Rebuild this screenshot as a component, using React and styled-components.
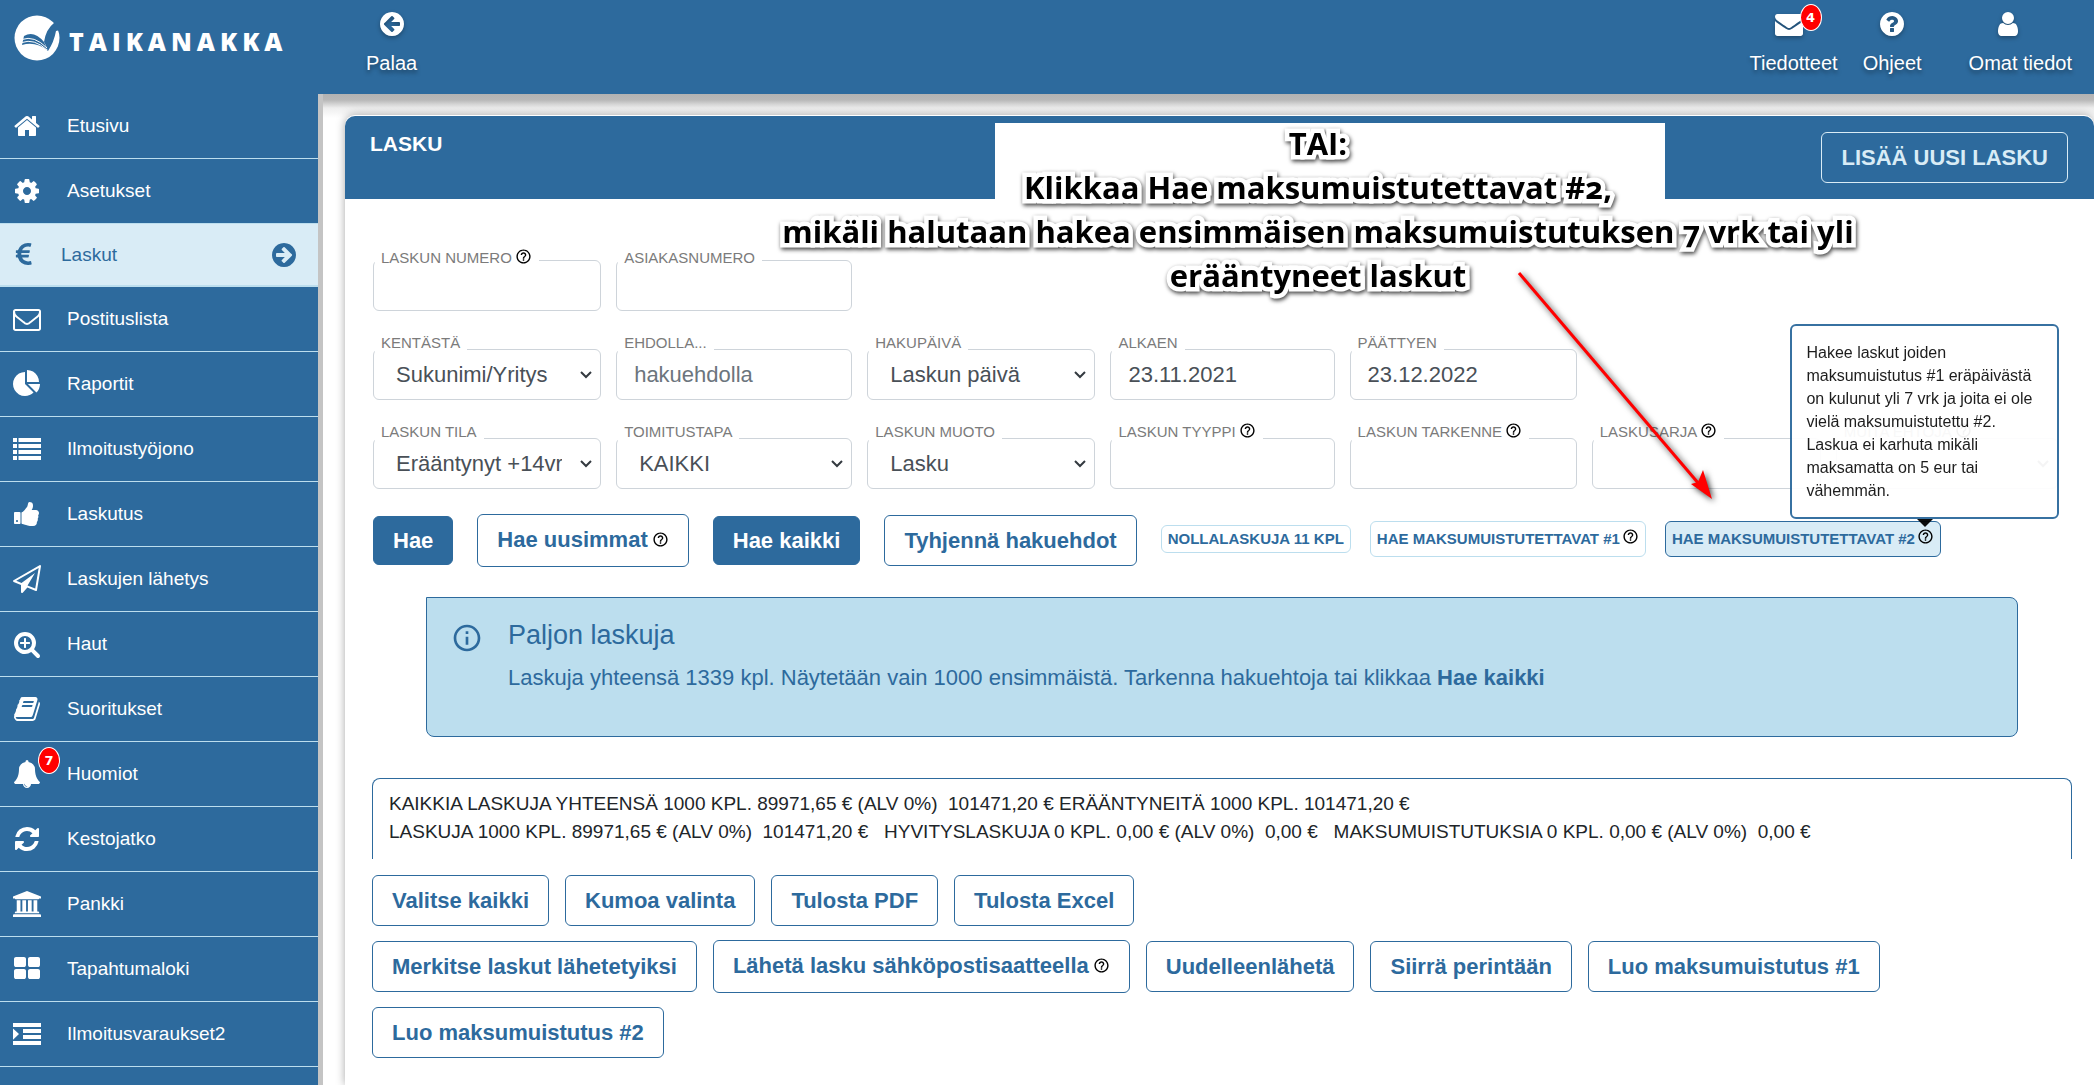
import React from "react";
import styled, { createGlobalStyle, css } from "styled-components";
import { MdHelpOutline, MdInfoOutline } from "react-icons/md";

const blue = "#2d6a9d";
const paleBlue = "#d9ecf6";
const softBlue = "#bcdeee";

const GlobalStyle = createGlobalStyle`
  *, *::before, *::after { box-sizing: border-box; }
  body {
    margin: 0;
    background: #fff;
    color: #212529;
    font-family: "Liberation Sans", Arial, sans-serif;
  }
`;

/* ---------- icons ---------- */

const Glyph = styled.svg`
  display: block;
  width: ${(p) => p.$size || 28}px;
  height: ${(p) => p.$size || 28}px;
  fill: currentColor;
  flex: none;
`;

const paths = {
  home: "M1472 992v480q0 26-19 45t-45 19h-384v-384h-256v384h-384q-26 0-45-19t-19-45v-480q0-1 .5-3t.5-3l575-474 575 474q1 2 1 6zm223-69l-62 74q-8 9-21 11h-3q-13 0-21-7l-692-577-692 577q-12 8-24 7-13-2-21-11l-62-74q-8-10-7-23.5t11-21.5l719-599q32-26 76-26t76 26l244 204v-195q0-14 9-23t23-9h192q14 0 23 9t9 23v408l219 182q10 8 11 21.5t-7 23.5z",
  cog: "M1152 896q0-106-75-181t-181-75-181 75-75 181 75 181 181 75 181-75 75-181zm512-109v222q0 12-8 23t-20 13l-185 28q-19 54-39 91 35 50 107 138 10 12 10 25t-9 23q-27 37-99 108t-94 71q-12 0-26-9l-138-108q-44 23-91 38-16 136-29 186-7 28-36 28h-222q-14 0-24.5-8.5t-11.5-21.5l-28-184q-49-16-90-37l-141 107q-10 9-25 9-14 0-25-11-126-114-165-168-7-10-7-23 0-12 8-23 15-21 51-66.5t54-70.5q-27-50-41-99l-183-27q-13-2-21-12.5t-8-23.5v-222q0-12 8-23t19-13l186-28q14-46 39-92-40-57-107-138-10-12-10-24 0-10 9-23 26-36 98.5-107.5t94.5-71.5q13 0 26 10l138 107q44-23 91-38 16-136 29-186 7-28 36-28h222q14 0 24.5 8.5t11.5 21.5l28 184q49 16 90 37l142-107q9-9 24-9 13 0 25 10 129 119 165 170 7 8 7 22 0 12-8 23-15 21-51 66.5t-54 70.5q26 50 41 98l183 28q13 2 21 12.5t8 23.5z",
  euro: "M1360 1307l35 159q3 12-3 22.5t-17 14.5l-5 1q-4 2-10.5 3.5t-16 4.5-21.5 5.5-25.5 5-30 5-33.5 4.5-36.5 3-38.5 1q-234 0-409-130.5t-238-351.5h-95q-13 0-22.5-9.5t-9.5-22.5v-113q0-13 9.5-22.5t22.5-9.5h66q-2-57 1-105h-67q-14 0-23-9t-9-23v-114q0-14 9-23t23-9h98q67-210 243.5-338t400.5-128q102 0 194 23 11 3 20 15 6 11 3 24l-43 159q-3 13-14 19.5t-24 2.5l-4-1q-4-1-11.5-2.5l-17.5-3.5-22.5-3.5-26-3-29-2.5-29.5-1q-126 0-226 64t-150 176h468q16 0 25 12 10 12 7 26l-24 114q-5 26-32 26h-488q-3 37 0 105h459q15 0 25 12 9 12 6 27l-24 112q-2 11-11 18.5t-20 7.5h-387q48 117 149.5 185.5t228.5 68.5q18 0 36-1.5t33.5-3.5 29.5-4.5 24.5-5 18.5-4.5l12-3 5-2q13-5 26 2 12 7 15 21z",
  envelopeOpen: "M1664 1504v-768q-32 36-69 66-268 206-426 338-51 43-83 67t-86.5 48.5-102.5 24.5h-2q-48 0-102.5-24.5t-86.5-48.5-83-67q-158-132-426-338-37-30-69-66v768q0 13 9.5 22.5t22.5 9.5h1472q13 0 22.5-9.5t9.5-22.5zm0-1051v-24.5l-.5-13-3-12.5-5.5-9-9-7.5-14-2.5h-1472q-13 0-22.5 9.5t-9.5 22.5q0 168 147 284 193 152 401 317 6 5 35 29.5t46 37.5 44.5 31.5 50.5 27.5 43 9h2q20 0 43-9t50.5-27.5 44.5-31.5 46-37.5 35-29.5q208-165 401-317 54-43 100.5-115.5t46.5-131.5zm128-37v1088q0 66-47 113t-113 47h-1472q-66 0-113-47t-47-113v-1088q0-66 47-113t113-47h1472q66 0 113 47t47 113z",
  pie: "M768 890l546 546q-106 108-247.5 168t-298.5 60q-209 0-385.5-103t-279.5-279.5-103-385.5 103-385.5 279.5-279.5 385.5-103v762zm187 6h773q0 157-60 298.5t-168 247.5zm709-128h-768v-768q209 0 385.5 103t279.5 279.5 103 385.5z",
  list: "M0 192h256v256h-256zM352 192h1440v256h-1440zM0 576h256v256h-256zM352 576h1440v256h-1440zM0 960h256v256h-256zM352 960h1440v256h-1440zM0 1344h256v256h-256zM352 1344h1440v256h-1440z",
  thumb: "M320 1344q0-26-19-45t-45-19q-27 0-45.5 19t-18.5 45q0 27 18.5 45.5t45.5 18.5q26 0 45-18.5t19-45.5zm160-512v640q0 26-19 45t-45 19h-288q-26 0-45-19t-19-45v-640q0-26 19-45t45-19h288q26 0 45 19t19 45zm1184 0q0 86-55 149 15 44 15 76 3 76-43 137 17 56 0 117-15 57-54 94 9 112-49 181-64 76-197 78h-129q-66 0-144-15.5t-121.5-29-120.5-39.5q-123-43-158-44-26-1-45-19.5t-19-44.5v-641q0-25 18-43.5t43-20.5q24-2 76-59t101-121q68-87 101-120 18-18 31-48t17.5-48.5 13.5-60.5q7-39 12.5-61t19.5-52 34-50q19-19 45-19 46 0 82.5 10.5t60 26 40 40.5 24 45 12 50 5 45 .5 39q0 38-9.5 76t-19 60-27.5 56q-3 6-10 18t-11 22-8 24h277q78 0 135 57t57 135z",
  plane: "M1764 11q33 24 27 64l-256 1536q-5 29-32 45-14 8-31 8-11 0-24-5l-527-215-298 327q-18 21-47 21-14 0-23-4-19-7-30-23.5t-11-36.5v-452l-472-193q-37-14-40-55-3-39 32-59l1664-960q35-21 68 2zm-342 1499l221-1323-1434 827 336 137 863-639-478 797z",
  searchPlus: "M1088 800v64q0 13-9.5 22.5t-22.5 9.5h-224v224q0 13-9.5 22.5t-22.5 9.5h-64q-13 0-22.5-9.5t-9.5-22.5v-224h-224q-13 0-22.5-9.5t-9.5-22.5v-64q0-13 9.5-22.5t22.5-9.5h224v-224q0-13 9.5-22.5t22.5-9.5h64q13 0 22.5 9.5t9.5 22.5v224h224q13 0 22.5 9.5t9.5 22.5zm128 32q0-185-131.5-316.5t-316.5-131.5-316.5 131.5-131.5 316.5 131.5 316.5 316.5 131.5 316.5-131.5 131.5-316.5zm512 832q0 53-37.5 90.5t-90.5 37.5q-54 0-90-38l-343-342q-179 124-399 124-143 0-273.5-55.5t-225-150-150-225-55.5-273.5 55.5-273.5 150-225 225-150 273.5-55.5 273.5 55.5 225 150 150 225 55.5 273.5q0 220-124 399l343 343q37 37 37 90z",
  book: "M1703 478q40 57 18 129l-275 906q-19 64-76.5 107.5t-122.5 43.5h-923q-77 0-148.5-53.5t-99.5-131.5q-24-67-2-127 0-4 3-27t4-37q1-8-3-21.5t-3-19.5q2-11 8-21t16.5-23.5 16.5-23.5q23-38 45-91.5t30-91.5q3-10 .5-30t-.5-28q3-11 17-28t17-23q21-36 42-92t25-90q1-9-2.5-32t.5-28q4-13 22-30.5t22-22.5q19-26 42.5-84.5t27.5-96.5q1-8-3-25.5t-2-26.5q2-8 9-18t18-23 17-21q8-12 16.5-30.5t15-35 16-36 19.5-32 26.5-23.5 36-11.5 47.5 5.5l-1 3q38-9 51-9h761q74 0 114 56t18 130l-274 906q-36 119-71.5 153.5t-128.5 34.5h-869q-27 0-38 15-11 16-1 43 24 70 144 70h923q29 0 56-15.5t35-41.5l300-987q7-22 5-57 38 15 59 43zm-1064 2q-4 13 2 22.5t20 9.5h608q13 0 25.5-9.5t16.5-22.5l21-64q4-13-2-22.5t-20-9.5h-608q-13 0-25.5 9.5t-16.5 22.5zm-83 256q-4 13 2 22.5t20 9.5h608q13 0 25.5-9.5t16.5-22.5l21-64q4-13-2-22.5t-20-9.5h-608q-13 0-25.5 9.5t-16.5 22.5z",
  bell: "M912 1696q0-16-16-16-59 0-101.5-42.5t-42.5-101.5q0-16-16-16t-16 16q0 73 51.5 124.5t124.5 51.5q16 0 16-16zm816-288q0 52-38 90t-90 38h-448q0 106-75 181t-181 75-181-75-75-181h-448q-52 0-90-38t-38-90q50-42 91-88t85-119.5 74.5-158.5 50-206 19.5-260q0-152 117-282.5t307-158.5q-8-19-8-39 0-40 28-68t68-28 68 28 28 68q0 20-8 39 190 28 307 158.5t117 282.5q0 139 19.5 260t50 206 74.5 158.5 85 119.5 91 88z",
  refresh: "M1639 1056q0 5-1 7-64 268-268 434.5t-478 166.5q-146 0-282.5-55t-243.5-157l-129 129q-19 19-45 19t-45-19-19-45v-448q0-26 19-45t45-19h448q26 0 45 19t19 45-19 45l-137 137q71 66 161 102t187 36q134 0 250-65t186-179q11-17 53-117 8-23 30-23h192q13 0 22.5 9.5t9.5 22.5zm25-800v448q0 26-19 45t-45 19h-448q-26 0-45-19t-19-45 19-45l138-138q-148-137-349-137-134 0-250 65t-186 179q-11 17-53 117-8 23-30 23h-199q-13 0-22.5-9.5t-9.5-22.5v-7q65-268 270-434.5t480-166.5q146 0 284 55.5t245 156.5l130-129q19-19 45-19t45 19 19 45z",
  bank: "M832 0l960 384v128h-128q0 26-20.5 45t-48.5 19h-1526q-28 0-48.5-19t-20.5-45h-128v-128zm-704 640h256v768h128v-768h256v768h128v-768h256v768h128v-768h256v768h59q28 0 48.5 19t20.5 45v64h-1664v-64q0-26 20.5-45t48.5-19h59v-768zm1595 960q28 0 48.5 19t20.5 45v128h-1920v-128q0-26 20.5-45t48.5-19h1782z",
  large: "M832 1024v384q0 52-38 90t-90 38h-512q-52 0-90-38t-38-90v-384q0-52 38-90t90-38h512q52 0 90 38t38 90zm0-768v384q0 52-38 90t-90 38h-512q-52 0-90-38t-38-90v-384q0-52 38-90t90-38h512q52 0 90 38t38 90zm896 768v384q0 52-38 90t-90 38h-512q-52 0-90-38t-38-90v-384q0-52 38-90t90-38h512q52 0 90 38t38 90zm0-768v384q0 52-38 90t-90 38h-512q-52 0-90-38t-38-90v-384q0-52 38-90t90-38h512q52 0 90 38t38 90z",
  indent: "M0 192h1792v256h-1792zM640 576h1152v256h-1152zM640 960h1152v256h-1152zM0 1344h1792v256h-1792zM0 540l384 360-384 360z",
  arrowRight: "M1413 896q0-27-18-45l-91-91-362-362q-18-18-45-18t-45 18l-91 91q-18 18-18 45t18 45l189 189h-502q-26 0-45 19t-19 45v128q0 26 19 45t45 19h502l-189 189q-19 19-19 45t19 45l91 91q18 18 45 18t45-18l362-362 91-91q18-18 18-45zm251 0q0 209-103 385.5t-279.5 279.5-385.5 103-385.5-103-279.5-279.5-103-385.5 103-385.5 279.5-279.5 385.5-103 385.5 103 279.5 279.5 103 385.5z",
  envelope: "M1792 710v794q0 66-47 113t-113 47h-1472q-66 0-113-47t-47-113v-794q44 49 101 87 362 246 497 345 57 42 92.5 65.5t94.5 48 110 24.5h2q51 0 110-24.5t94.5-48 92.5-65.5q170-123 498-345 57-39 100-87zm0-294q0 79-49 151t-122 123q-376 261-468 325-10 7-42.5 31t-54 38.5-52 32.5-57.5 27-50 9h-2q-23 0-50-9t-57.5-27-52-32.5-54-38.5-42.5-31q-91-64-262-182.5t-205-142.5q-62-42-117-115.5t-55-136.5q0-78 41.5-130t118.5-52h1472q65 0 112.5 47t47.5 113z",
  question: "M1024 1376v-192q0-14-9-23t-23-9h-192q-14 0-23 9t-9 23v192q0 14 9 23t23 9h192q14 0 23-9t9-23zm256-672q0-88-55.5-163t-138.5-116-170-41q-243 0-371 213-15 24 8 42l132 100q7 6 19 6 16 0 25-12 53-68 86-92 34-24 86-24 48 0 85.5 26t37.5 59q0 38-20 61t-68 45q-63 28-115.5 86.5t-52.5 125.5v36q0 14 9 23t23 9h192q14 0 23-9t9-23q0-19 21.5-49.5t54.5-49.5q32-18 49-28.5t46-35 44.5-48 28-60.5 12.5-81zm384 192q0 209-103 385.5t-279.5 279.5-385.5 103-385.5-103-279.5-279.5-103-385.5 103-385.5 279.5-279.5 385.5-103 385.5 103 279.5 279.5 103 385.5z",
  user: "M1536 1399q0 109-62.5 187t-150.5 78h-854q-88 0-150.5-78t-62.5-187q0-85 8.5-160.5t31.5-152 58.5-131 94-89 134.5-34.5q131 128 313 128t313-128q76 0 134.5 34.5t94 89 58.5 131 31.5 152 8.5 160.5zm-256-887q0 159-112.5 271.5t-271.5 112.5-271.5-112.5-112.5-271.5 112.5-271.5 271.5-112.5 271.5 112.5 112.5 271.5z",
};

const boxes = { bank: "-128 0 1920 1792", euro: "200 0 1792 1792" };

function Icon({ name, size, flip }) {
  return (
    <Glyph viewBox={boxes[name] || "0 0 1792 1792"} $size={size} aria-hidden="true">
      <path d={paths[name]} transform={flip ? "translate(1792 0) scale(-1 1)" : undefined} />
    </Glyph>
  );
}

/* ---------- page frame ---------- */

const Page = styled.div`
  min-height: 100vh;
  display: grid;
  grid-template-columns: 323px minmax(0, 1fr);
  grid-template-rows: 94px 1fr;
`;

const Header = styled.header`
  grid-column: 1 / -1;
  display: flex;
  background: ${blue};
  position: relative;
`;

const Brand = styled.a`
  width: 318px;
  height: 75px;
  padding-left: 14px;
  display: flex;
  align-items: center;
  gap: 9px;
  color: #fff;
  text-decoration: none;
`;

const BrandMark = styled.svg`
  width: 46px;
  height: 46px;
  flex: none;
`;

const BrandName = styled.span`
  font: 800 25px/30px "Open Sans", Lato, sans-serif;
  letter-spacing: 5px;
  padding-top: 6px;
`;

const TopNav = styled.nav`
  display: flex;
  gap: ${(p) => p.$gap || 0}px;
  padding: 10px 22px 0 48px;
  ${(p) => p.$end && css`margin-left: auto;`}
`;

const TopLink = styled.a`
  display: flex;
  flex-direction: column;
  align-items: center;
  gap: 13px;
  color: #fff;
  font-size: 20px;
  line-height: 24px;
  text-decoration: none;
  text-shadow: 0 3px 4px rgba(0, 0, 0, 0.4);
  ${(p) => p.$spaced && css`margin-left: 22px;`}
  svg { filter: drop-shadow(0 2px 2px rgba(0, 0, 0, 0.3)); }
`;

const IconHolder = styled.span`
  position: relative;
  display: block;
  margin-right: ${(p) => p.$trail || 0}px;
`;

const Badge = styled.span`
  position: absolute;
  left: 25px;
  top: ${(p) => p.$top}px;
  width: 22px;
  height: 27px;
  border: 1px solid #fff;
  border-radius: 50%;
  background: #f00;
  color: #fff;
  text-align: center;
  text-shadow: none;
  font: bold 13px/25px "DejaVu Sans", sans-serif;
`;

const Sidebar = styled.nav`
  background: ${blue};
  border-right: 5px solid #c4c4c4;
`;

const Menu = styled.ul`
  list-style: none;
  margin: 0;
  padding: 0;
`;

const MenuLink = styled.a`
  display: flex;
  align-items: center;
  height: ${(p) => (p.$active ? 63 : 65)}px;
  padding: 0 20px 0 13px;
  gap: ${(p) => (p.$active ? 20 : 26)}px;
  border-bottom: ${(p) => (p.$active ? 2 : 1)}px solid ${softBlue};
  background: ${(p) => (p.$active ? paleBlue : blue)};
  color: ${(p) => (p.$active ? blue : "#fff")};
  font-size: 19px;
  line-height: 24px;
  text-decoration: none;
`;

const MenuText = styled.span`
  flex: 1;
`;

const Main = styled.main`
  position: relative;
  display: flex;
  flex-direction: column;
  padding: 21px 0 0 22px;
  background: linear-gradient(#b2b2b2 0, #b8b8b8 6px, #eeeeee 14px, #fff 24px) no-repeat 0 0 / 100% 24px;
`;

/* ---------- card ---------- */

const Card = styled.section`
  flex: 1;
  border-top: 1px solid #fff;
  border-radius: 10px 10px 0 0;
  background: #fff;
  box-shadow: 0 0 10px rgba(0, 0, 0, 0.35);
`;

const CardHeader = styled.div`
  display: flex;
  justify-content: space-between;
  align-items: flex-start;
  height: 83px;
  padding: 16px 26px 0 25px;
  border-radius: 10px 10px 0 0;
  background: ${blue};
`;

const Title = styled.h1`
  margin: 0;
  color: #fff;
  font-size: 21px;
  line-height: 24px;
`;

const CardBody = styled.div`
  padding: 49px 22px 0 27px;
`;

const Fields = styled.form`
  display: grid;
  grid-template-columns: 228fr 236fr 228fr 224fr 227fr 229fr 222fr;
  gap: 22px 15px;
  padding: 0 14px 0 1px;
`;

const Field = styled.div`
  display: grid;
  grid-template-rows: ${(p) => (p.$compact ? 12 : 16)}px 51px;
  grid-template-columns: minmax(0, 1fr);
  ${(p) => p.$first && css`grid-column: 1;`}
`;

const Label = styled.label`
  z-index: 1;
  justify-self: start;
  display: flex;
  gap: 3px;
  height: 19px;
  margin-left: 2px;
  padding: 0 7px 0 6px;
  background: #fff;
  color: #7b7b7b;
  font-size: 15px;
  line-height: 20px;
  white-space: nowrap;
`;

const box = css`
  grid-area: 2 / 1;
  width: 100%;
  height: 51px;
  margin: 0;
  border: 1px solid #ced4da;
  border-radius: 6px;
  background: #fff;
  color: #495057;
  font: 22px/26px "Liberation Sans", Arial, sans-serif;
`;

const Input = styled.input`
  ${box}
  padding: 0 17px;
  &::placeholder { color: #6c757d; opacity: 1; }
`;

const Select = styled.select`
  ${box}
  appearance: none;
  padding: 0 38px 0 22px;
`;

const Chevron = styled.svg`
  grid-area: 2 / 1;
  justify-self: end;
  align-self: center;
  z-index: 1;
  width: 14px;
  height: 10px;
  margin-right: 8px;
  fill: none;
  stroke: #343a40;
  stroke-width: 2;
  pointer-events: none;
`;

const HelpMark = styled.span`
  position: relative;
  display: inline-flex;
  flex: none;
  color: #000;
  svg { display: block; width: 17px; height: 17px; }
`;

const Actions = styled.div`
  display: flex;
  align-items: center;
  margin-top: ${(p) => p.$top || 0}px;
  gap: ${(p) => p.$rowGap || 0}px ${(p) => p.$gap}px;
  padding-left: ${(p) => p.$inset || 0}px;
  ${(p) => p.$wrap && css`flex-wrap: wrap;`}
`;

const SmallActions = styled(Actions)`
  padding-bottom: 4px;
`;

const Button = styled.button`
  display: flex;
  align-items: center;
  gap: 4px;
  height: ${(p) => (p.$help ? 53 : 51)}px;
  padding: 0 19px ${(p) => (p.$help ? 2 : 0)}px;
  border: 1px solid ${blue};
  border-radius: 6px;
  background: #fff;
  color: ${blue};
  font: bold 22px/28px "Liberation Sans", Arial, sans-serif;
  white-space: nowrap;
  ${(p) => p.$solid && css`
    height: 49px;
    background: ${blue};
    color: #fff;
  `}
  ${(p) => p.$ghost && css`
    background: transparent;
    border-color: ${paleBlue};
    color: ${paleBlue};
  `}
`;

const SmallButton = styled.button`
  display: flex;
  align-items: center;
  gap: 2px;
  height: ${(p) => (p.$tall ? 36 : 28)}px;
  padding: 0 6px;
  border: 1px solid ${(p) => (p.$active ? blue : softBlue)};
  border-radius: 6px;
  background: ${(p) => (p.$active ? paleBlue : "#fff")};
  color: ${blue};
  font: bold 15px/20px "Liberation Sans", Arial, sans-serif;
  white-space: nowrap;
  svg { margin-bottom: 4px; }
`;

const Tooltip = styled.span`
  position: absolute;
  z-index: 3;
  bottom: 100%;
  left: 50%;
  width: 269px;
  margin: 0 0 9px -135px;
  padding: 15px 14px;
  border: 2px solid ${blue};
  border-radius: 6px;
  background: #fff;
  color: #111;
  font-size: 16px;
  font-weight: normal;
  line-height: 23px;
  text-align: left;
  white-space: normal;
  opacity: 0.95;
  &::after {
    content: "";
    position: absolute;
    top: 100%;
    left: 50%;
    margin: 2px 0 0 -8px;
    border: 8px solid transparent;
    border-top-color: #000;
    border-bottom: 0;
  }
`;

const Alert = styled.section`
  display: flex;
  gap: 25px;
  min-height: 140px;
  margin: 30px 54px 0;
  padding: 21px 24px;
  border: 1px solid ${blue};
  border-radius: 0 8px 8px 8px;
  background: ${softBlue};
  color: ${blue};
  > svg { width: 32px; height: 32px; margin-top: 3px; flex: none; }
`;

const AlertTitle = styled.h2`
  margin: 0 0 15px;
  font-size: 27px;
  line-height: 32px;
  font-weight: normal;
`;

const AlertText = styled.p`
  margin: 0;
  font-size: 22px;
  line-height: 24px;
`;

const Totals = styled.div`
  height: 81px;
  margin-top: 41px;
  padding: 11px 16px;
  border: 1px solid ${blue};
  border-bottom: 0;
  border-radius: 8px 8px 0 0;
  font-size: 19px;
  line-height: 28px;
  white-space: pre-wrap;
`;

/* ---------- annotation over the page ---------- */

const Patch = styled.div`
  position: absolute;
  left: 672px;
  top: 29px;
  width: 670px;
  height: 77px;
  background: #fff;
`;

const Note = styled.p`
  position: absolute;
  z-index: 4;
  left: 445px;
  top: 27px;
  width: 1100px;
  margin: 0;
  color: #000;
  font: 700 31px/44px "Open Sans", "Noto Sans", sans-serif;
  font-variant-numeric: oldstyle-nums;
  text-align: center;
  white-space: nowrap;
  -webkit-text-stroke: 9px #fff;
  paint-order: stroke fill;
  stroke-linejoin: round;
  filter: drop-shadow(1px 2px 2px rgba(0, 0, 0, 0.75));
`;

const Arrow = styled.svg`
  position: absolute;
  z-index: 4;
  left: 1185px;
  top: 170px;
  width: 220px;
  height: 250px;
  overflow: visible;
  pointer-events: none;
  filter: drop-shadow(2px 2px 3px rgba(0, 0, 0, 0.8));
`;

/* ---------- data ---------- */

const menu = [
  { icon: "home", text: "Etusivu" },
  { icon: "cog", text: "Asetukset" },
  { icon: "euro", text: "Laskut", active: true },
  { icon: "envelopeOpen", text: "Postituslista" },
  { icon: "pie", text: "Raportit" },
  { icon: "list", text: "Ilmoitustyöjono" },
  { icon: "thumb", text: "Laskutus" },
  { icon: "plane", text: "Laskujen lähetys" },
  { icon: "searchPlus", text: "Haut" },
  { icon: "book", text: "Suoritukset" },
  { icon: "bell", text: "Huomiot", badge: 7 },
  { icon: "refresh", text: "Kestojatko" },
  { icon: "bank", text: "Pankki" },
  { icon: "large", text: "Tapahtumaloki" },
  { icon: "indent", text: "Ilmoitusvaraukset2" },
];

const fields = [
  { id: "numero", label: "LASKUN NUMERO", help: true, first: true, compact: true },
  { id: "asiakas", label: "ASIAKASNUMERO", compact: true },
  { id: "kentasta", label: "KENTÄSTÄ", option: "Sukunimi/Yritys", first: true },
  { id: "ehdolla", label: "EHDOLLA...", placeholder: "hakuehdolla" },
  { id: "hakupaiva", label: "HAKUPÄIVÄ", option: "Laskun päivä" },
  { id: "alkaen", label: "ALKAEN", value: "23.11.2021" },
  { id: "paattyen", label: "PÄÄTTYEN", value: "23.12.2022" },
  { id: "tila", label: "LASKUN TILA", option: "Erääntynyt +14vrk", first: true },
  { id: "toimitus", label: "TOIMITUSTAPA", option: "KAIKKI" },
  { id: "muoto", label: "LASKUN MUOTO", option: "Lasku" },
  { id: "tyyppi", label: "LASKUN TYYPPI", help: true },
  { id: "tarkenne", label: "LASKUN TARKENNE", help: true },
  { id: "sarja", label: "LASKUSARJA", help: true },
  { id: "muita", label: "MUITA EHTOJA", help: true, option: "" },
];

const Help = ({ children }) => (
  <HelpMark>
    <MdHelpOutline />
    {children}
  </HelpMark>
);

function FormField({ id, label, help, first, compact, option, placeholder, value }) {
  return (
    <Field $first={first} $compact={compact}>
      <Label htmlFor={id}>
        {label}
        {help && <Help />}
      </Label>
      {option !== undefined ? (
        <>
          <Select id={id} defaultValue={option}>
            <option>{option}</option>
          </Select>
          <Chevron viewBox="0 0 14 10">
            <path d="M2 2l5 5 5-5" />
          </Chevron>
        </>
      ) : (
        <Input id={id} placeholder={placeholder} defaultValue={value} />
      )}
    </Field>
  );
}

export default function App() {
  return (
    <Page>
      <GlobalStyle />
      <Header>
        <Brand href="#etusivu">
          <BrandMark viewBox="0 0 46 46" aria-hidden="true">
            <circle cx="23" cy="23" r="22.5" fill="#fff" />
            <path d="M30 27Q32 14 40 8L46 4V15L42 16Q40 27 34 36Q31 28 30 27Z" fill={blue} />
            <path d="M10 21Q20 15 30 27L34 36Q22 26 8 30Z" fill={blue} />
            <path d="M8 24.500Q20 20 33 33M8 27.500Q20 23 33 35" fill="none" stroke="#fff" strokeWidth="1" />
          </BrandMark>
          <BrandName>TAIKANAKKA</BrandName>
        </Brand>
        <TopNav aria-label="Takaisin">
          <TopLink href="#palaa">
            <Icon name="arrowRight" flip />
            Palaa
          </TopLink>
        </TopNav>
        <TopNav $end $gap={25} aria-label="Käyttäjä">
          <TopLink href="#tiedotteet">
            <IconHolder $trail={10}>
              <Icon name="envelope" />
              <Badge $top={-6}>4</Badge>
            </IconHolder>
            Tiedotteet
          </TopLink>
          <TopLink href="#ohjeet">
            <Icon name="question" />
            Ohjeet
          </TopLink>
          <TopLink href="#tiedot" $spaced>
            <IconHolder $trail={24}>
              <Icon name="user" />
            </IconHolder>
            Omat tiedot
          </TopLink>
        </TopNav>
      </Header>

      <Sidebar>
        <Menu>
          {menu.map((m) => (
            <li key={m.text}>
              <MenuLink href="#valikko" $active={m.active}>
                <IconHolder>
                  <Icon name={m.icon} />
                  {m.badge && <Badge $top={-13}>{m.badge}</Badge>}
                </IconHolder>
                <MenuText>{m.text}</MenuText>
                {m.active && <Icon name="arrowRight" />}
              </MenuLink>
            </li>
          ))}
        </Menu>
      </Sidebar>

      <Main>
        <Card>
          <CardHeader>
            <Title>LASKU</Title>
            <Button $ghost>LISÄÄ UUSI LASKU</Button>
          </CardHeader>
          <CardBody>
            <Fields>
              {fields.map((f) => (
                <FormField key={f.id} {...f} />
              ))}
            </Fields>

            <Actions $top={25} $gap={24} $inset={1}>
              <Button $solid>Hae</Button>
              <Button $help>
                Hae uusimmat <Help />
              </Button>
              <Button $solid>Hae kaikki</Button>
              <Button>Tyhjennä hakuehdot</Button>
              <SmallActions $gap={19}>
                <SmallButton>NOLLALASKUJA 11 KPL</SmallButton>
                <SmallButton $tall>
                  HAE MAKSUMUISTUTETTAVAT #1 <Help />
                </SmallButton>
                <SmallButton $tall $active>
                  HAE MAKSUMUISTUTETTAVAT #2{" "}
                  <Help>
                    <Tooltip role="tooltip">
                      Hakee laskut joiden maksumuistutus #1 eräpäivästä on kulunut yli 7 vrk ja joita ei ole
                      vielä maksumuistutettu #2. Laskua ei karhuta mikäli maksamatta on 5 eur tai vähemmän.
                    </Tooltip>
                  </Help>
                </SmallButton>
              </SmallActions>
            </Actions>

            <Alert>
              <MdInfoOutline />
              <div>
                <AlertTitle>Paljon laskuja</AlertTitle>
                <AlertText>
                  Laskuja yhteensä 1339 kpl. Näytetään vain 1000 ensimmäistä. Tarkenna hakuehtoja tai klikkaa{" "}
                  <b>Hae kaikki</b>
                </AlertText>
              </div>
            </Alert>

            <Totals>
              {"KAIKKIA LASKUJA YHTEENSÄ 1000 KPL. 89971,65 € (ALV 0%)  101471,20 € ERÄÄNTYNEITÄ 1000 KPL. 101471,20 €\n"}
              {"LASKUJA 1000 KPL. 89971,65 € (ALV 0%)  101471,20 €   HYVITYSLASKUJA 0 KPL. 0,00 € (ALV 0%)  0,00 €   MAKSUMUISTUTUKSIA 0 KPL. 0,00 € (ALV 0%)  0,00 €"}
            </Totals>

            <Actions $top={16} $gap={16}>
              <Button>Valitse kaikki</Button>
              <Button>Kumoa valinta</Button>
              <Button>Tulosta PDF</Button>
              <Button>Tulosta Excel</Button>
            </Actions>
            <Actions $top={14} $gap={16} $rowGap={14} $wrap>
              <Button>Merkitse laskut lähetetyiksi</Button>
              <Button $help>
                Lähetä lasku sähköpostisaatteella <Help />
              </Button>
              <Button>Uudelleenlähetä</Button>
              <Button>Siirrä perintään</Button>
              <Button>Luo maksumuistutus #1</Button>
              <Button>Luo maksumuistutus #2</Button>
            </Actions>
          </CardBody>
        </Card>

        <Patch />
        <Note>
          TAI:
          <br />
          Klikkaa Hae maksumuistutettavat #2,
          <br />
          mikäli halutaan hakea ensimmäisen maksumuistutuksen 7 vrk tai yli
          <br />
          erääntyneet laskut
        </Note>
        <Arrow viewBox="0 0 220 250" aria-hidden="true">
          <path d="M11 9L191 220" stroke="#f00" strokeWidth="3" />
          <path d="M204 235L183 220L190 218L195 206Z" fill="#f00" />
        </Arrow>
      </Main>
    </Page>
  );
}
